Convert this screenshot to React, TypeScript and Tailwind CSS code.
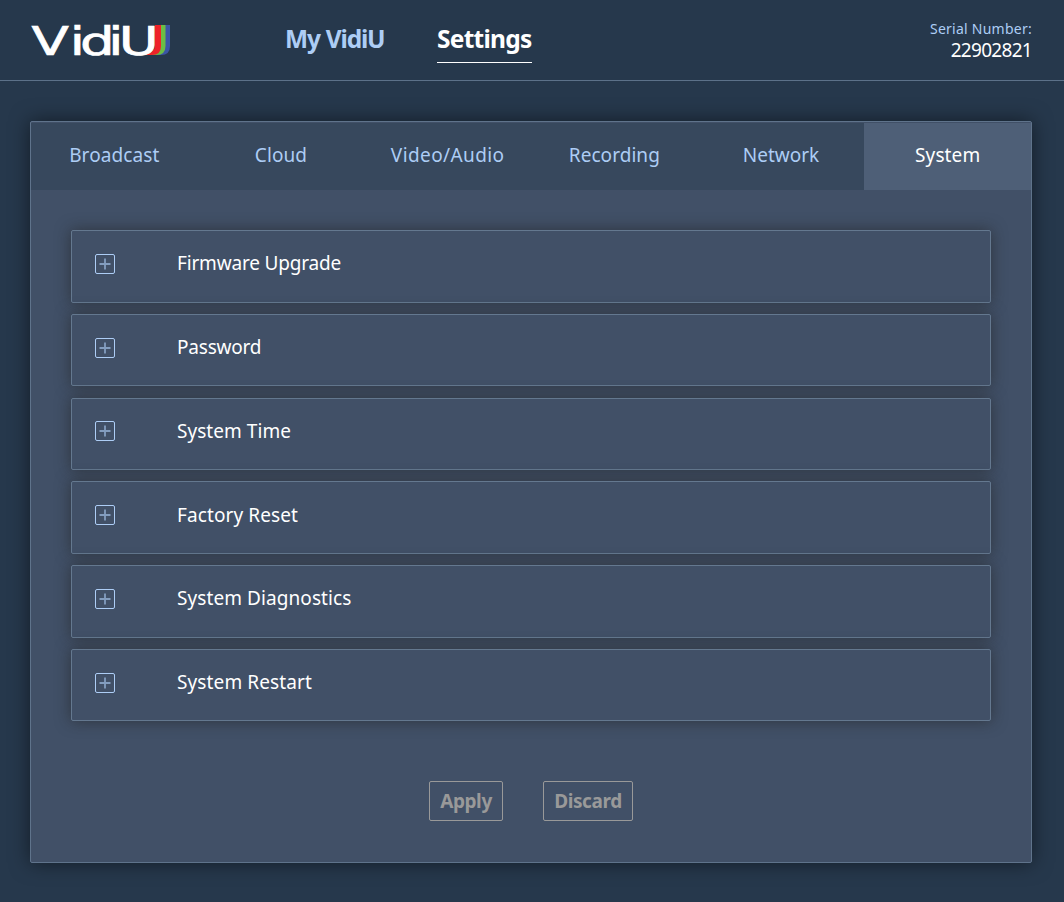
const tabs = [
  { label: 'Broadcast', tracking: 'tracking-[0.1px]' },
  { label: 'Cloud', tracking: 'tracking-[0.1px]' },
  { label: 'Video/Audio', tracking: 'tracking-[0.4px]' },
  { label: 'Recording', tracking: 'tracking-[0.05px]' },
  { label: 'Network', tracking: 'tracking-[0px]' },
  { label: 'System', tracking: 'tracking-[0.1px]', active: true },
];

const sections = [
  { label: 'Firmware Upgrade', tracking: 'tracking-[-0.18px]' },
  { label: 'Password', tracking: 'tracking-[-0.2px]' },
  { label: 'System Time', tracking: 'tracking-[0.05px]' },
  { label: 'Factory Reset', tracking: 'tracking-[0.1px]' },
  { label: 'System Diagnostics', tracking: 'tracking-[0.08px]' },
  { label: 'System Restart', tracking: 'tracking-[0.12px]' },
];

function Logo() {
  return (
    <svg className="overflow-visible" width="140" height="32" viewBox="0 0 140 32" role="img" aria-label="VidiU">
      <path d="M133 1h6v21q0 9-9 9h-9q12-2 12-9z" fill="#3b55a5" />
      <path d="M129 1h5.500v21q0 9-9 9h-8q11.500-2 11.500-9z" fill="#6cbd45" />
      <path d="M124 1h6v21q0 9-9 9h-9q12-2 12-9z" fill="#ee2229" />
      <text
        transform="scale(1.4 1)"
        x="0.400 27.700 35.000 55.200 62.700"
        y="30.600"
        fontSize="39"
        fill="#fff"
        stroke="#fff"
        strokeWidth="0.700"
        fontFamily="'DejaVu Sans', sans-serif"
      >
        VidiU
      </text>
    </svg>
  );
}

function PlusBox() {
  return (
    <svg className="shrink-0" width="20" height="20" viewBox="0 0 20 20" fill="none" aria-hidden="true">
      <rect x="0.500" y="0.500" width="19" height="19" rx="1.500" stroke="#adcdf5" />
      <path d="M4.500 10h11M10 4.500v11" stroke="#839dbf" strokeWidth="1.800" />
    </svg>
  );
}

export default function App() {
  return (
    <div className="h-[902px] w-full overflow-hidden bg-[#26384c] font-['Noto_Sans',sans-serif] text-white">
      <header className="flex h-[81px] items-start border-b border-[#5c7189] pr-[32px] pl-[31px]">
        <div className="pt-[24px]">
          <Logo />
        </div>
        <nav className="ml-[114px] flex gap-[53px] pt-[20px] text-[24.500px] leading-[38px] font-bold">
          <a className="w-[99px] whitespace-nowrap text-[#adcdf5] tracking-[-1.2px] [word-spacing:1px]">My VidiU</a>
          <a className="h-[43px] w-[95px] whitespace-nowrap border-b border-white tracking-[-0.75px]">Settings</a>
        </nav>
        <div className="ml-auto flex flex-col items-end pt-[19px]">
          <span className="text-[14px] leading-[20px] tracking-[0.25px] text-[#adcdf5]">Serial Number:</span>
          <span className="text-[19px] leading-[22px] tracking-[-0.7px]">22902821</span>
        </div>
      </header>

      <main className="mx-[30px] mt-[40px] h-[742px] w-[1002px] rounded-[2px] border border-[#5f738b] bg-[#415067] pt-px shadow-[0_0_20px_rgba(0,0,0,0.5)]">
        <nav className="grid h-[67px] grid-cols-6 bg-[#37485d]">
          {tabs.map((t) => (
            <a
              key={t.label}
              className={`flex justify-center pt-[17px] text-[19px] leading-[30px] ${t.tracking} ${
                t.active ? 'bg-[#4e5f77] text-white' : 'text-[#adcdf5]'
              }`}
            >
              <span>{t.label}</span>
            </a>
          ))}
        </nav>

        <div className="mx-[40px] mt-[40.200px] flex w-[920px] flex-col gap-[11.360px]">
          {sections.map((s) => (
            <section
              key={s.label}
              className="flex h-[72.400px] items-start rounded-[2px] border border-[#64788f] bg-[#415067] pl-[23px] shadow-[0_0_15px_rgba(34,34,34,0.6)]"
            >
              <div className="pt-[22.800px]">
                <PlusBox />
              </div>
              <span className={`ml-[62px] pt-[17.150px] text-[19px] leading-[30px] ${s.tracking}`}>{s.label}</span>
            </section>
          ))}
        </div>

        <div className="mt-[60px] flex gap-[40px] pl-[398px] text-[19px] font-bold text-[#999]">
          <button className="flex h-[40px] w-[74px] items-center justify-center rounded-[2px] border border-[#999] tracking-[-0.4px]">
            Apply
          </button>
          <button className="flex h-[40px] w-[90px] items-center justify-center rounded-[2px] border border-[#999] tracking-[-0.4px]">
            Discard
          </button>
        </div>
      </main>
    </div>
  );
}
